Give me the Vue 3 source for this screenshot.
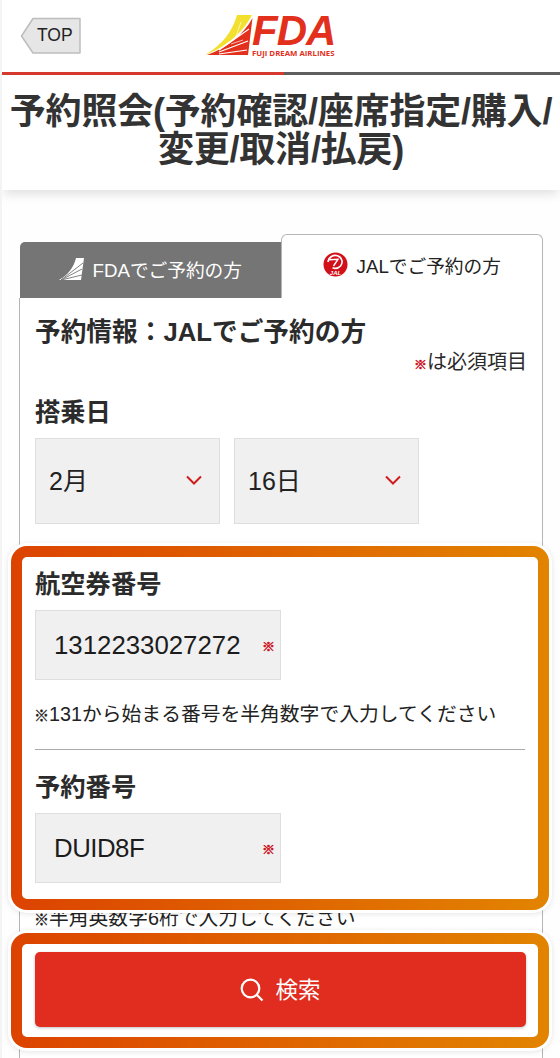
<template>
  <div class="page">
    <header class="site-header">
      <a class="top-link">
        <svg width="62" height="38" viewBox="0 0 62 38">
          <polygon points="13,1.500 60,1.500 60,36 13,36 1.500,19" fill="#e6e6e6" stroke="#bdbdbd" stroke-width="1.500" stroke-linejoin="round" />
          <text x="17" y="24" class="top-text">TOP</text>
        </svg>
      </a>
      <div class="logo">
        <svg class="logo-tail" width="48" height="44" viewBox="0 0 48 44">
          <path d="M0 41C13 33 26 22 32 1H47C40 15 24 32 0 41Z" fill="#f3df2e" />
          <path d="M47.500 4L43 41H2C22 34 39 20 47.500 4Z" fill="#e2301c" />
          <path d="M14 36L44 15M14 38L43 27M14 40L42 36" stroke="#fff" stroke-width="1.100" fill="none" />
          <path d="M30 25L36 8M26 30L38 26" stroke="#fff" stroke-width=".8" fill="none" opacity=".8" />
        </svg>
        <div class="logo-words">
          <span class="logo-fda">FDA</span>
          <span class="logo-sub">FUJI DREAM AIRLINES</span>
        </div>
      </div>
    </header>
    <div class="rule"></div>
    <h1 class="page-title">予約照会(予約確認/座席指定/購入/<br />変更/取消/払戻)</h1>

    <main class="content">
      <div class="tabs">
        <div class="tab tab-off">
          <svg width="25" height="24" viewBox="0 0 25 24">
            <path d="M0 23C9 18 15 10 17 1H25L22 23Z" fill="#fff" />
            <path d="M2 23L24 6M2 23L23 12M2 23L23 18" stroke="#757575" stroke-width=".9" fill="none" />
          </svg>
          <span>FDAでご予約の方</span>
        </div>
        <div class="tab tab-on">
          <svg width="25" height="25" viewBox="0 0 25 25">
            <circle cx="12.500" cy="12.500" r="12" fill="#d2101a" />
            <path d="M5 10C5.500 5 10.500 2.500 14.500 3.800C19 5.300 20.500 10.500 17.500 14C15.500 16.200 12 16.800 9.500 15.800" stroke="#fff" stroke-width="1.600" fill="none" />
            <path d="M6.500 7.800L15 7.300L10.500 14" stroke="#fff" stroke-width="1.400" fill="none" />
            <text x="12.500" y="22.500" class="jal-mark">JAL</text>
          </svg>
          <span>JALでご予約の方</span>
        </div>
      </div>

      <section class="panel">
        <h2 class="panel-title">予約情報：JALでご予約の方</h2>
        <p class="required"><span class="mark">※</span>は必須項目</p>

        <h3 class="label label-date">搭乗日</h3>
        <div class="selects">
          <div v-for="item in dates" :key="item" class="select">
            <span class="select-value">{{ item }}</span>
            <svg width="18" height="12" viewBox="0 0 18 12">
              <path d="M2 2.500L9 9.500L16 2.500" stroke="#cf1d1d" stroke-width="2" fill="none" />
            </svg>
          </div>
        </div>

        <div class="highlight fields">
          <h3 class="label">航空券番号</h3>
          <div class="input">
            <span>1312233027272</span>
            <span class="mark input-mark">※</span>
          </div>
          <p class="note"><span class="note-mark">※</span>131から始まる番号を半角数字で入力してください</p>
          <hr class="divider" />
          <h3 class="label">予約番号</h3>
          <div class="input">
            <span class="code">DUID8F</span>
            <span class="mark input-mark">※</span>
          </div>
        </div>
        <p class="note note-under"><span class="note-mark">※</span>半角英数字6桁で入力してください</p>

        <div class="highlight action">
          <button class="search-btn" type="button">
            <svg width="24" height="24" viewBox="0 0 24 24">
              <circle cx="10.500" cy="10.500" r="8.800" stroke="#fff" stroke-width="2.200" fill="none" />
              <path d="M17 17L22.500 22.500" stroke="#fff" stroke-width="2.200" fill="none" />
            </svg>
            <span class="search-label">検索</span>
          </button>
        </div>
      </section>
    </main>
  </div>
</template>

<script setup>
const dates = ['2月', '16日']
</script>

<style>
html,
body {
  margin: 0;
  background: #fff;
}
</style>

<style scoped>
.page {
  width: 560px;
  height: 1058px;
  overflow: hidden;
  box-sizing: border-box;
  border-left: 2px solid #f4f4f4;
  background: #fefefe;
  color: #2b2b2b;
  font-family: "Liberation Sans", "Noto Sans CJK JP", sans-serif;
}

.site-header {
  height: 72px;
  display: flex;
  align-items: flex-start;
  background: #fff;
}

.top-link {
  margin: 17px 0 0 18px;
  height: 38px;
}

.top-text {
  font-size: 17.500px;
  fill: #222;
}

.logo {
  display: flex;
  margin: 14px 0 0 123px;
}

.logo-tail {
  flex: none;
}

.logo-words {
  display: flex;
  flex-direction: column;
  margin-left: -1px;
  color: #e2301c;
}

.logo-fda {
  height: 33px;
  font-size: 42px;
  line-height: 33px;
  font-weight: 700;
  font-style: italic;
  letter-spacing: -1px;
}

.logo-sub {
  margin-top: 1px;
  font-family: "Open Sans", sans-serif;
  font-size: 7.800px;
  line-height: 10px;
  font-weight: 700;
  white-space: nowrap;
}

.rule {
  height: 3px;
  background: linear-gradient(90deg, #d6392e 282px, #5f5f5f 282px);
}

.page-title {
  margin: 0;
  height: 115px;
  box-sizing: border-box;
  padding-top: 18px;
  background: #fff;
  box-shadow: 0 6px 10px -2px rgba(0, 0, 0, 0.12);
  font-size: 36px;
  line-height: 38px;
  font-weight: 700;
  text-align: center;
  white-space: nowrap;
  letter-spacing: -0.2px;
  color: #333;
}

.content {
  padding: 44px 17px 0;
}

.tabs {
  display: flex;
  align-items: flex-end;
  height: 64px;
}

.tab {
  flex: 1;
  display: flex;
  align-items: center;
  justify-content: center;
  gap: 9px;
  box-sizing: border-box;
  font-size: 18.700px;
}

.tab-off {
  height: 56px;
  padding-bottom: 3px;
  margin-left: 1px;
  background: #757575;
  color: #fff;
  border-radius: 5px 0 0 0;
}

.tab-on {
  height: 64px;
  padding-bottom: 5px;
  background: #fff;
  border: 1px solid #b5b5b5;
  border-bottom: 0;
  border-radius: 6px 6px 0 0;
  color: #222;
}

.jal-mark {
  font-size: 6px;
  font-weight: 700;
  font-style: italic;
  fill: #fff;
  text-anchor: middle;
}

.panel {
  box-sizing: border-box;
  height: 800px;
  padding: 0 15px;
  background: #fff;
  border: 1px solid #b5b5b5;
  border-top: 0;
}

.panel-title {
  margin: 0;
  padding-top: 16px;
  font-size: 25.700px;
  line-height: 36px;
  font-weight: 700;
}

.required {
  margin: 0;
  height: 24px;
  padding-bottom: 1px;
  font-size: 20px;
  line-height: 24px;
  text-align: right;
}

.mark {
  color: #cf1020;
  font-size: 13px;
  font-weight: 700;
  -webkit-text-stroke: 0.5px #cf1020;
}

.label {
  margin: 0;
  font-size: 25.300px;
  line-height: 36px;
  font-weight: 700;
}

.label-date {
  margin-top: 19px;
}

.selects {
  display: flex;
  gap: 14px;
  margin-top: 8px;
}

.select {
  width: 185px;
  height: 86px;
  box-sizing: border-box;
  display: flex;
  align-items: center;
  justify-content: space-between;
  padding: 0 16px 0 13px;
  background: #f0f0f0;
  border: 1px solid #dedede;
  font-size: 25px;
  color: #222;
}

.select-value {
  padding-bottom: 5px;
}

.select svg {
  margin-bottom: 3px;
}

.highlight {
  position: relative;
  z-index: 1;
  box-sizing: border-box;
  width: 538px;
  margin-left: -24px;
  padding: 0 13px;
  border: 11px solid transparent;
  border-radius: 16px;
  background:
    linear-gradient(#fff, #fff) padding-box,
    linear-gradient(90deg, #dc4300, #e28400) border-box;
  box-shadow: 0 0 0 3px #fff, 0 1px 6px 2px rgba(0, 0, 0, 0.14);
}

.fields {
  height: 364px;
  margin-top: 22px;
  padding-top: 9px;
}

.input {
  width: 246px;
  height: 70px;
  box-sizing: border-box;
  display: flex;
  align-items: center;
  justify-content: space-between;
  padding: 0 5px 0 18px;
  margin-top: 8px;
  background: #f0f0f0;
  border: 1px solid #dedede;
  font-size: 25.800px;
  color: #1c1c1c;
}

.input-mark {
  font-size: 13px;
}

.code {
  letter-spacing: -0.5px;
}

.note {
  margin: 0;
  font-size: 19.800px;
  line-height: 24px;
  color: #222;
  white-space: nowrap;
}

.note-mark {
  display: inline-block;
  width: 15px;
  margin-left: -1px;
  font-size: 15px;
  font-weight: 700;
  -webkit-text-stroke: 0.3px #222;
}

.fields .note {
  margin-top: 22px;
}

.divider {
  width: 490px;
  margin: 21px 0 19px;
  border: 0;
  border-top: 1px solid #aaa;
}

.note-under {
  margin-top: -4px;
}

.action {
  height: 115px;
  margin-top: 1px;
  padding-top: 8px;
}

.search-btn {
  width: 491px;
  height: 75px;
  display: flex;
  align-items: center;
  justify-content: center;
  gap: 12px;
  padding: 0;
  border: 0;
  border-radius: 5px;
  background: #e02d20;
  box-shadow: 0 1px 3px rgba(0, 0, 0, 0.25);
  color: #fff;
  font-family: inherit;
  font-size: 22.500px;
}

.search-label {
  margin: 0 0 3px -1px;
}
</style>
